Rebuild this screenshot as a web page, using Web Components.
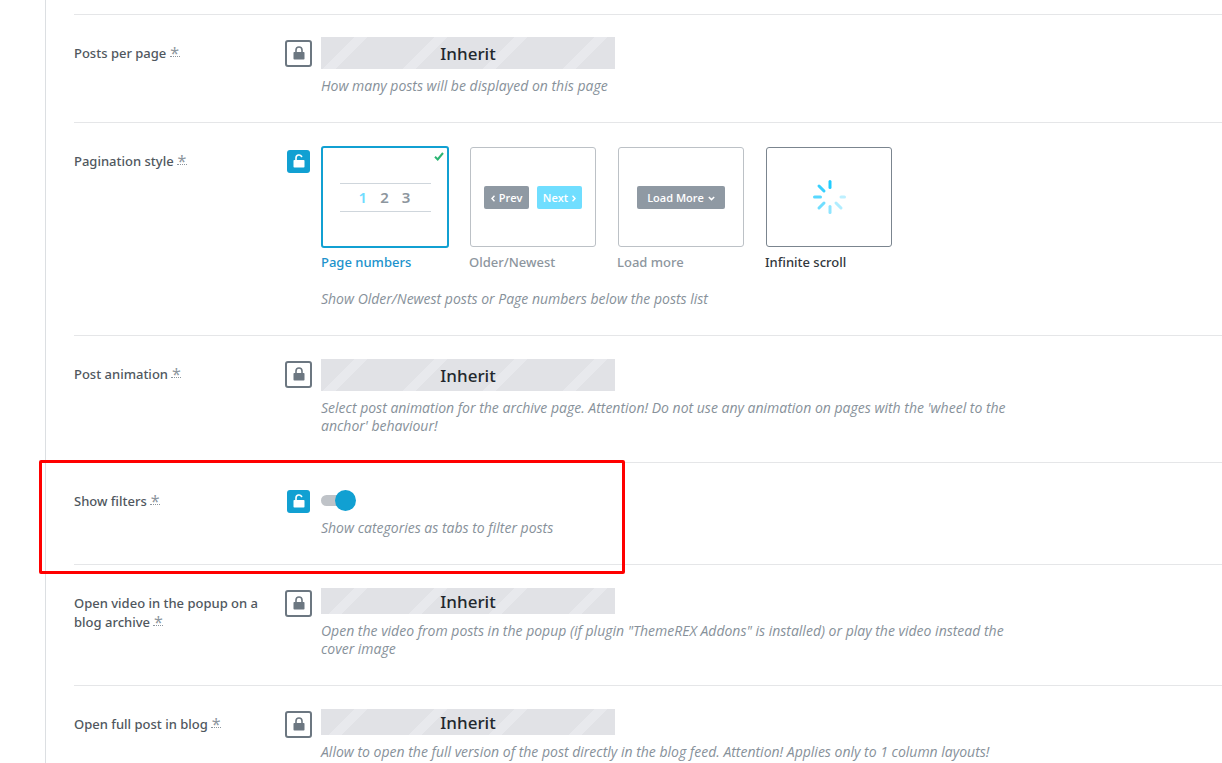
<!DOCTYPE html>
<html lang="en">
<head>
<meta charset="utf-8">
<title>Blog archive options</title>
<style>
  body { margin: 0; background: #fff; color: #50575e; font: 13px/19px "Noto Sans", "Open Sans", sans-serif; }
</style>
</head>
<body>
<options-panel>
  <option-row class="first" label="Posts per page" description="How many posts will be displayed on this page">
    <inherit-cover></inherit-cover>
  </option-row>
  <option-row unlocked label="Pagination style" description="Show Older/Newest posts or Page numbers below the posts list">
    <style-choices></style-choices>
  </option-row>
  <option-row label="Post animation" description="Select post animation for the archive page. Attention! Do not use any animation on pages with the 'wheel to the anchor' behaviour!">
    <inherit-cover></inherit-cover>
  </option-row>
  <option-row unlocked label="Show filters" description="Show categories as tabs to filter posts">
    <toggle-switch label="Show filters"></toggle-switch>
    <highlight-frame slot="overlay"></highlight-frame>
  </option-row>
  <option-row label="Open video in the popup on a blog archive" description='Open the video from posts in the popup (if plugin "ThemeREX Addons" is installed) or play the video instead the cover image'>
    <inherit-cover compact></inherit-cover>
  </option-row>
  <option-row label="Open full post in blog" description="Allow to open the full version of the post directly in the blog feed. Attention! Applies only to 1 column layouts!">
    <inherit-cover compact></inherit-cover>
  </option-row>
</options-panel>

<script>
class BaseElement extends HTMLElement {
  connectedCallback() {
    if (this.shadowRoot) return;
    this.attachShadow({ mode: "open" }).innerHTML = this.render();
  }
  text(name) {
    return (this.getAttribute(name) || "").replace(/&/g, "&amp;").replace(/</g, "&lt;").replace(/"/g, "&quot;");
  }
}

customElements.define("options-panel", class extends BaseElement {
  render() {
    return `<style>
      :host { display: block; margin-left: 45px; padding: 14px 0 0 28px; border-left: 1px solid #dcdfe2; }
      main { display: block; border-top: 1px solid #e5e6e8; }
    </style><main><slot></slot></main>`;
  }
});

customElements.define("lock-button", class extends BaseElement {
  render() {
    const open = this.hasAttribute("unlocked");
    const shackle = open ? "M3 6V4a3 3 0 0 1 5.600-1.500" : "M3 6.500V4a3 3 0 0 1 6 0v2.500";
    return `<style>
      :host { display: block; }
      button { box-sizing: border-box; display: grid; place-items: center; width: 27px; height: 27px; margin: 0; padding: 0 0 2px;
        border: 2px solid #6c7781; border-radius: 3px; background: #fff; color: #6c7781; }
      button.open { width: 23px; height: 23px; margin: 2px; padding: 0 0 2px; border: 0; background: #11a0d2; color: #fff; }
      svg { display: block; }
    </style>
    <button type="button" class="${open ? "open" : ""}" aria-label="${open ? "Unlocked" : "Locked"}">
      <svg width="12" height="14" viewBox="0 0 12 14" aria-hidden="true">
        <path d="${shackle}" fill="none" stroke="currentColor" stroke-width="1.600" stroke-linecap="round"/>
        <rect x=".5" y="6" width="11" height="7.500" rx=".8" fill="currentColor"/>
      </svg>
    </button>`;
  }
});

customElements.define("option-row", class extends BaseElement {
  render() {
    // The last two words stay on one line with the asterisk.
    const words = this.text("label").split(" ");
    const tail = words.splice(-2).join(" ");
    return `<style>
      :host { display: grid; grid-template-columns: 193px 27px minmax(0, 727px); align-items: start;
        position: relative; border-bottom: 1px solid #e5e6e8; padding-bottom: 27px; }
      h4 { margin: 29px 0 0; font: inherit; font-weight: 500; }
      .tail { white-space: nowrap; }
      abbr { display: inline-block; height: 11px; width: 10px; border-bottom: 1px dotted #8d969e; color: #8d969e;
        font: 400 16px/16px "Noto Sans", sans-serif; text-align: center; text-decoration: none; vertical-align: top; margin-top: 1px; }
      lock-button { margin: 25px 0 0 18px; }
      .field { margin: 23px 0 0 27px; }
      :host(.first) .field { margin-top: 22px; }
      p { margin: 8px 0 0; font: italic 14px/18px "Open Sans", sans-serif; color: #87919a; }
    </style>
    <h4>${words.join(" ")} <span class="tail">${tail} <abbr title="Inheritable option">*</abbr></span></h4>
    <lock-button ${this.hasAttribute("unlocked") ? "unlocked" : ""}></lock-button>
    <div class="field"><slot></slot><p>${this.text("description")}</p></div>
    <slot name="overlay"></slot>`;
  }
});

customElements.define("inherit-cover", class extends BaseElement {
  render() {
    return `<style>
      :host { display: block; max-width: 294px; }
      button { display: block; width: 100%; height: 32px; margin: 0; padding: 1px 0 0; border: 0; color: #23282d;
        font: 500 17px/31px "Noto Sans", sans-serif; text-align: center;
        background: #e1e2e6 linear-gradient(135deg, transparent 21%, #e8e9ed 21% 29%, transparent 29% 71%, #e8e9ed 71% 79%, transparent 79%) 0 0 / 80px 80px; }
      :host([compact]) button { height: 26px; line-height: 25px; }
    </style><button type="button">Inherit</button>`;
  }
});

customElements.define("toggle-switch", class extends BaseElement {
  render() {
    return `<style>
      :host { display: block; padding-top: 4px; }
      input { appearance: none; display: flex; align-items: center; position: relative; width: 35px; height: 21px; margin: 0; }
      input::before { content: ""; width: 28px; height: 11px; border-radius: 6px; background: #bfc3c8; }
      input::after { content: ""; position: absolute; right: 0; top: 0; width: 21px; height: 21px; border-radius: 50%; background: #11a0d2; }
    </style><input type="checkbox" role="switch" checked aria-label="${this.text("label")}">`;
  }
});

customElements.define("highlight-frame", class extends BaseElement {
  render() {
    return `<style>
      :host { position: absolute; z-index: 1; box-sizing: border-box; left: -35px; top: -3px; bottom: -10px; width: 586px;
        border: 3px solid #ff0000; border-radius: 2px; pointer-events: none; }
    </style>`;
  }
});

customElements.define("style-choice", class extends BaseElement {
  render() {
    return `<style>
      :host { display: block; width: 128px; color: #8d969e; font-weight: 500; }
      label { display: block; position: relative; }
      input { position: absolute; opacity: 0; margin: 0; }
      .card { box-sizing: border-box; display: grid; place-items: center; position: relative; height: 100px; margin: 1px 1px 6px; border: 1px solid #bcc1c6; border-radius: 3px; }
      :host([hovered]) { color: #32373c; }
      :host([hovered]) .card { border-color: #7b858f; }
      input:checked + .card { height: 102px; margin: 0 0 5px; border: 2px solid #11a0d2; }
      :host([selected]) { color: #2092cc; }
      .check { display: none; position: absolute; right: 3px; top: 4px; }
      input:checked + .card .check { display: block; }
    </style>
    <label><input type="radio" name="style" ${this.hasAttribute("selected") ? "checked" : ""}>
      <span class="card"><slot></slot>
        <svg class="check" width="10" height="9" viewBox="0 0 10 9" aria-hidden="true"><path d="M1 4.800l2.700 2.700L9 1" fill="none" stroke="#2bb573" stroke-width="2"/></svg>
      </span>${this.text("label")}</label>`;
  }
});

customElements.define("style-choices", class extends BaseElement {
  render() {
    return `<style>
      :host { display: flex; flex-wrap: wrap; gap: 20px; padding-bottom: 10px; }
      .pager { display: flex; box-sizing: border-box; justify-content: center; gap: 13px; width: 91px; height: 29px; padding-right: 1px;
        border: solid #cfd6dc; border-width: 1px 0; color: #8d969e; font: 600 15px/27px "Noto Sans", sans-serif; }
      .pager b { color: #6fdcff; font-weight: 600; }
      .pair { display: flex; gap: 8px; }
      .pill { display: flex; align-items: center; justify-content: center; gap: 4px; width: 45px; height: 23px; border-radius: 2px;
        background: #8f99a3; color: #fff; font: 600 11px/23px "Open Sans", sans-serif; }
      .next { background: #70deff; }
      .wide { width: 88px; }
      svg { display: block; }
      .pill svg { fill: none; stroke: #fff; stroke-width: 1.500; margin-top: 2px; }
    </style>
    <style-choice selected label="Page numbers"><span class="pager"><b>1</b><span>2</span><span>3</span></span></style-choice>
    <style-choice label="Older/Newest"><span class="pair">
      <span class="pill"><svg width="4" height="7" viewBox="0 0 4 7"><path d="M3.500 .8L1 3.500l2.500 2.700"/></svg>Prev</span>
      <span class="pill next">Next<svg width="4" height="7" viewBox="0 0 4 7"><path d="M.5 .8L3 3.500.5 6.200"/></svg></span></span></style-choice>
    <style-choice label="Load more"><span class="pill wide">Load More<svg width="7" height="5" viewBox="0 0 7 5"><path d="M.8 1l2.700 2.600L6.200 1"/></svg></span></style-choice>
    <style-choice hovered label="Infinite scroll">
      <svg width="36" height="36" viewBox="0 0 36 36" fill="none" stroke-width="3" stroke-linecap="round" aria-hidden="true">
        <path d="M19 2.500v6" stroke="#20ccff"/><path d="M8 7l5 5" stroke="#38d0ff"/><path d="M3.500 18h6" stroke="#58d8ff"/>
        <path d="M8 29l5-5" stroke="#70deff"/><path d="M19 27.500v6" stroke="#8fe5ff"/><path d="M30 29l-5-5" stroke="#b0edff"/><path d="M30 18h3.500" stroke="#bdf0ff"/>
      </svg></style-choice>`;
  }
});
</script>
</body>
</html>
